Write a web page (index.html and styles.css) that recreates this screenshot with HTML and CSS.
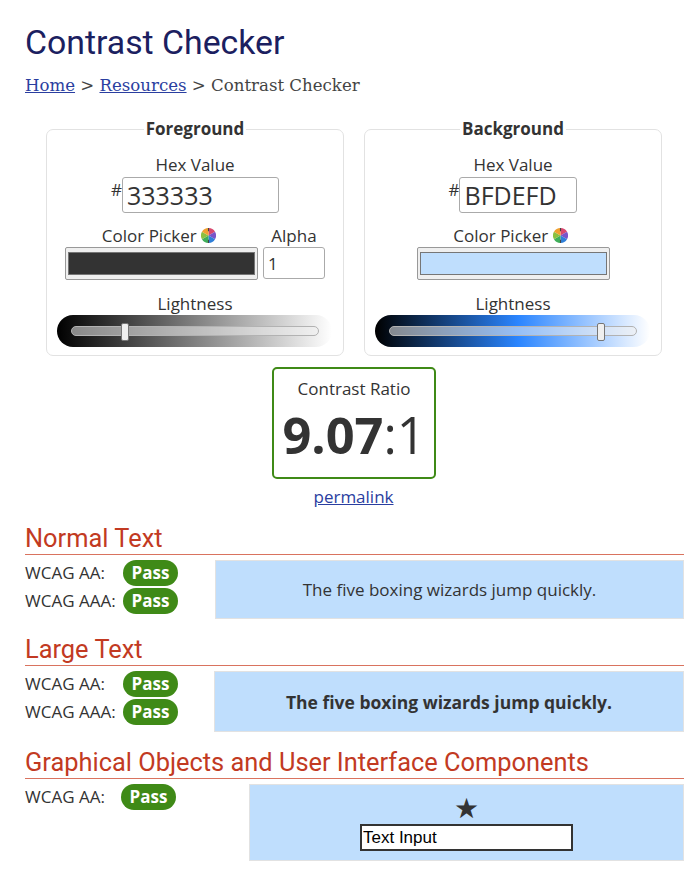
FILE: index.html
```html
<!DOCTYPE html>
<html lang="en">
<head>
    <meta charset="UTF-8">
    <meta name="viewport" content="width=device-width, initial-scale=1.0">
    <title>Contrast Checker</title>
    <link rel="stylesheet" href="styles.css">
</head>
<body>
    <h1>Contrast Checker</h1>
    <p class="crumbs"><a href="#">Home</a> &gt; <a href="#">Resources</a> &gt; Contrast Checker</p>

    <div class="pickers">
        <fieldset class="picker">
            <legend>Foreground</legend>
            <label class="cap">Hex Value</label>
            <div class="hexrow"><span class="hash">#</span><input class="hex wide" type="text" value="333333"></div>
            <div class="colorrow">
                <div class="colorcol">
                    <label class="cap pickcap">Color Picker <svg class="wheel" viewBox="1 1 14 14"><path d="M8 8L8 1A7 7 0 0 1 14.1 4.5Z" fill="#d9486e"/><path d="M8 8L14.1 4.5A7 7 0 0 1 14.1 11.5Z" fill="#7a55c8"/><path d="M8 8L14.1 11.5A7 7 0 0 1 8 15Z" fill="#2f7fd8"/><path d="M8 8L8 15A7 7 0 0 1 1.9 11.5Z" fill="#3fae5a"/><path d="M8 8L1.9 11.5A7 7 0 0 1 1.9 4.5Z" fill="#8cc040"/><path d="M8 8L1.9 4.5A7 7 0 0 1 8 1Z" fill="#f0a030"/><path d="M8 1V4M8 12V15" stroke="#444" stroke-width="1"/></svg></label>
                    <div class="swatch"><div class="swatch-fill dark"></div></div>
                </div>
                <div class="alphacol">
                    <label class="cap">Alpha</label>
                    <input class="alpha" type="text" value="1">
                </div>
            </div>
            <label class="cap light">Lightness</label>
            <div class="slider grey">
                <div class="track"></div>
                <div class="thumb" style="left: 64px"></div>
            </div>
        </fieldset>

        <fieldset class="picker">
            <legend>Background</legend>
            <label class="cap">Hex Value</label>
            <div class="hexrow"><span class="hash">#</span><input class="hex" type="text" value="BFDEFD"></div>
            <div class="colorrow">
                <div class="colorcol">
                    <label class="cap pickcap">Color Picker <svg class="wheel" viewBox="1 1 14 14"><path d="M8 8L8 1A7 7 0 0 1 14.1 4.5Z" fill="#d9486e"/><path d="M8 8L14.1 4.5A7 7 0 0 1 14.1 11.5Z" fill="#7a55c8"/><path d="M8 8L14.1 11.5A7 7 0 0 1 8 15Z" fill="#2f7fd8"/><path d="M8 8L8 15A7 7 0 0 1 1.9 11.5Z" fill="#3fae5a"/><path d="M8 8L1.9 11.5A7 7 0 0 1 1.9 4.5Z" fill="#8cc040"/><path d="M8 8L1.9 4.5A7 7 0 0 1 8 1Z" fill="#f0a030"/><path d="M8 1V4M8 12V15" stroke="#444" stroke-width="1"/></svg></label>
                    <div class="swatch"><div class="swatch-fill pale"></div></div>
                </div>
            </div>
            <label class="cap light">Lightness</label>
            <div class="slider blue">
                <div class="track"></div>
                <div class="thumb" style="left: 222px"></div>
            </div>
        </fieldset>
    </div>

    <div class="ratio">
        <div class="ratio-label">Contrast Ratio</div>
        <div class="ratio-value"><strong>9.07</strong>:1</div>
    </div>
    <p class="permalink"><a href="#">permalink</a></p>

    <h2>Normal Text</h2>
    <div class="result normal">
        <div class="checks">
            <div class="check"><span class="level">WCAG AA:</span><span class="pass">Pass</span></div>
            <div class="check"><span class="level">WCAG AAA:</span><span class="pass">Pass</span></div>
        </div>
        <div class="sample">The five boxing wizards jump quickly.</div>
    </div>

    <h2>Large Text</h2>
    <div class="result large">
        <div class="checks">
            <div class="check"><span class="level">WCAG AA:</span><span class="pass">Pass</span></div>
            <div class="check"><span class="level">WCAG AAA:</span><span class="pass">Pass</span></div>
        </div>
        <div class="sample">The five boxing wizards jump quickly.</div>
    </div>

    <h2>Graphical Objects and User Interface Components</h2>
    <div class="result graphic">
        <div class="checks">
            <div class="check"><span class="level">WCAG AA:</span><span class="pass">Pass</span></div>
        </div>
        <div class="sample">
            <span class="star">★</span>
            <input class="demo" type="text" value="Text Input">
        </div>
    </div>
</body>
</html>
```

FILE: styles.css
```css
body {
    margin: 0;
    padding: 0 16px 0 25px;
    background-color: white;
    color: #333;
    font-family: "Open Sans", sans-serif;
    font-size: 17px;
}
h1 {
    margin: 0;
    padding-top: 24px;
    font-family: Roboto, sans-serif;
    font-size: 33.8px;
    font-weight: 400;
    line-height: 38px;
    color: #1b2060;
}
.crumbs {
    margin: 13px 0 0;
    font-family: "DejaVu Serif", serif;
    font-size: 16.6px;
    line-height: 22px;
    color: #444;
}
a {
    color: #2a3ea0;
}

.pickers {
    display: grid;
    grid-template-columns: 298px 298px;
    column-gap: 20px;
    margin: 21px 0 0 21px;
}
.picker {
    margin: 0;
    padding: 14px 0 0;
    height: 238px;
    box-sizing: border-box;
    border: 1px solid #e2e2e2;
    border-radius: 7px;
    display: flex;
    flex-direction: column;
    align-items: center;
    text-align: center;
    min-width: 0;
}
legend {
    padding: 0 2px;
    font-weight: bold;
    text-align: center;
    line-height: 22px;
}
.cap {
    display: block;
    line-height: 22px;
}
.pickcap {
    padding-right: 5px;
}
.hexrow {
    display: flex;
    justify-content: center;
    margin-top: 1px;
}
.hash {
    line-height: 22px;
    margin-top: 2px;
}
.hex {
    width: 118px;
    height: 36px;
    box-sizing: border-box;
    padding: 0 4px;
    border: 1px solid #aaa;
    border-radius: 3px;
    font-family: "Open Sans", sans-serif;
    font-size: 25px;
    color: #333;
}
.wide {
    width: 157px;
}
.colorrow {
    display: flex;
    justify-content: center;
    gap: 5px;
    margin-top: 12px;
}
.colorcol, .alphacol {
    display: flex;
    flex-direction: column;
    align-items: center;
}
.wheel {
    width: 15px;
    height: 15px;
    vertical-align: -1px;
}
.swatch {
    width: 193px;
    height: 33px;
    box-sizing: border-box;
    padding: 4px 2px;
    background-color: #efefef;
    border: 1px solid #999;
    border-radius: 2px;
}
.swatch-fill {
    height: 100%;
    border: 1px solid #767676;
    box-sizing: border-box;
}
.dark {
    background-color: #333333;
}
.pale {
    background-color: #BFDEFD;
}
.alpha {
    width: 62px;
    height: 32px;
    box-sizing: border-box;
    padding: 0 4px;
    border: 1px solid #aaa;
    border-radius: 3px;
    font-family: "Open Sans", sans-serif;
    font-size: 17px;
    color: #333;
}
.light {
    margin-top: 13px;
}
.slider {
    position: relative;
    width: 275px;
    height: 32px;
    margin-left: -2px;
    border-radius: 16px;
}
.grey {
    background: linear-gradient(to right, #000, #808080 50%, #fff);
}
.blue {
    background: linear-gradient(to right, #000, #2a85ff 52%, #fff);
}
.track {
    position: absolute;
    top: 11px;
    left: 14px;
    right: 13px;
    height: 10px;
    box-sizing: border-box;
    background-color: rgba(239, 239, 239, 0.55);
    border: 1px solid #b2b2b2;
    border-radius: 5px;
}
.thumb {
    position: absolute;
    top: 8px;
    width: 8px;
    height: 18px;
    box-sizing: border-box;
    background-color: #efefef;
    border: 1px solid #767676;
    border-radius: 2px;
}

.ratio {
    width: 164px;
    height: 112px;
    box-sizing: border-box;
    margin: 11px 0 0 247px;
    border: 2px solid #3f8a17;
    border-radius: 5px;
    text-align: center;
}
.ratio-label {
    margin-top: 9px;
    line-height: 22px;
}
.ratio-value {
    margin-top: 2px;
    font-size: 50.5px;
    line-height: 66px;
}
.permalink {
    margin: 6px 0 0;
    padding-right: 2px;
    text-align: center;
    line-height: 23px;
}

h2 {
    margin: 16px 0 0;
    padding-bottom: 1px;
    border-bottom: 1px solid #d9735f;
    font-family: Roboto, sans-serif;
    font-size: 25.4px;
    font-weight: 400;
    line-height: 29px;
    color: #c23a22;
}
.result {
    display: flex;
    justify-content: space-between;
    margin-top: 5px;
}
.checks {
    display: flex;
    flex-direction: column;
    gap: 2px;
}
.check {
    display: flex;
    align-items: center;
    height: 26px;
}
.level {
    width: 98px;
    line-height: 26px;
}
.pass {
    width: 55px;
    height: 26px;
    box-sizing: border-box;
    background-color: #3f8a17;
    border-radius: 13px;
    color: white;
    font-weight: bold;
    text-align: center;
    line-height: 25px;
}
.sample {
    background-color: #BFDEFD;
    border: 1px solid #e2e2e2;
    box-sizing: border-box;
    display: flex;
    align-items: center;
    justify-content: center;
}
.normal .sample {
    width: 469px;
    height: 59px;
}
.large .sample {
    width: 470px;
    height: 61px;
    font-size: 17.5px;
    font-weight: bold;
}
.graphic .check .level {
    width: 96px;
}
.graphic .sample {
    width: 435px;
    height: 77px;
    flex-direction: column;
}
.star {
    font-family: "DejaVu Sans", sans-serif;
    font-size: 28px;
    line-height: 30px;
}
.demo {
    width: 213px;
    height: 27px;
    box-sizing: border-box;
    padding: 0 1px;
    border: 2px solid #333;
    background-color: white;
    font-family: "Liberation Sans", sans-serif;
    font-size: 17px;
    color: black;
}
```
